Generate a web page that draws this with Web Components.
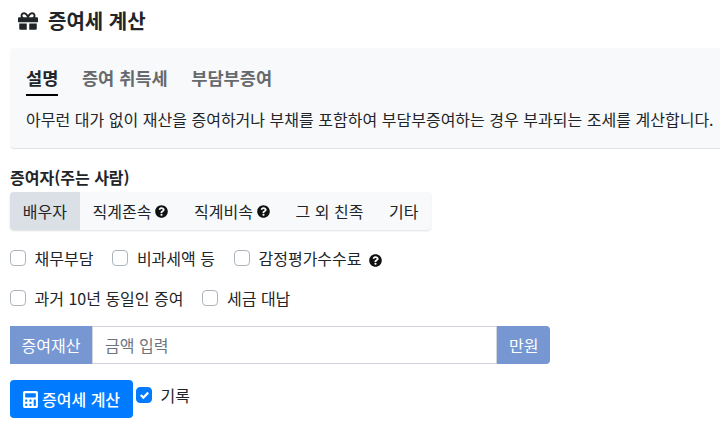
<!DOCTYPE html>
<html lang="ko">
<head>
<meta charset="utf-8">
<title>증여세 계산</title>
<style>
html, body { margin: 0; padding: 0; background: #fff; }
body {
    width: 720px;
    height: 427px;
    overflow: hidden;
    font-family: "Noto Sans CJK KR", "Noto Sans", sans-serif;
    font-size: 16px;
    color: #212529;
}
</style>
</head>
<body>
<gift-calculator></gift-calculator>

<script>
const ICON_HELP = `<svg viewBox="0 0 512 512" width="13" height="13" aria-hidden="true"><path fill="currentColor" d="M504 256c0 137-111 248-248 248S8 393 8 256 119 8 256 8s248 111 248 248zM262.700 90c-54.500 0-89.300 23-116.500 63.800-3.500 5.300-2.400 12.400 2.700 16.300l34.700 26.300c5.200 3.900 12.600 3 16.700-2.100 17.900-22.700 30.100-35.800 57.300-35.800 20.400 0 45.700 13.100 45.700 32.900 0 15-12.400 22.700-32.600 34-23.600 13.200-54.800 29.700-54.800 70.900V300c0 6.600 5.400 12 12 12h56c6.600 0 12-5.400 12-12v-1.300c0-28.600 83.500-29.800 83.500-107.200C379.300 133.300 318.900 90 262.700 90zM256 340c-24.300 0-44 19.700-44 44s19.700 44 44 44 44-19.700 44-44-19.700-44-44-44z"/></svg>`;

class HelpIcon extends HTMLElement {
    constructor() {
        super();
        this.attachShadow({ mode: "open" }).innerHTML = `
        <style>
        :host { display: inline-flex; color: #111; margin: 1px 0 0 4px; }
        :host([wide]) { margin: 4px 0 0 7px; }
        </style>
        ${ICON_HELP}`;
    }
}
customElements.define("help-icon", HelpIcon);

const title_template = document.createElement("template");
title_template.innerHTML = `
<style>
:host { display: flex; align-items: center; gap: 10px; height: 48px; padding: 0 0 6px 18px; box-sizing: border-box; color: #212529; }
h1 { margin: 0; font-size: 20px; font-weight: 700; line-height: 24px; }
svg { display: block; }
</style>
<svg viewBox="0 0 512 512" width="20" height="20" aria-hidden="true"><path fill="#212529" d="M32 448c0 17.700 14.300 32 32 32h160V320H32v128zm256 32h160c17.700 0 32-14.300 32-32V320H288v160zm192-320h-42.100c6.200-12.100 10.100-25.500 10.100-40 0-48.500-39.500-88-88-88-41.600 0-68.500 21.300-103 68.300-34.500-47-61.400-68.300-103-68.300-48.500 0-88 39.500-88 88 0 14.500 3.800 27.900 10.100 40H32c-17.700 0-32 14.300-32 32v80c0 8.800 7.200 16 16 16h480c8.800 0 16-7.200 16-16v-80c0-17.700-14.300-32-32-32zm-326.100 0c-22.100 0-40-17.900-40-40s17.900-40 40-40c19.900 0 34.600 3.300 86.100 80h-86.100zm206.100 0h-86.100c51.400-76.500 65.700-80 86.100-80 22.100 0 40 17.900 40 40s-17.900 40-40 40z"/></svg>
<h1><slot></slot></h1>
`;

class PageTitle extends HTMLElement {
    constructor() {
        super();
        this.attachShadow({ mode: "open" }).appendChild(title_template.content.cloneNode(true));
    }
}
customElements.define("page-title", PageTitle);

const info_template = document.createElement("template");
info_template.innerHTML = `
<style>
:host { display: block; margin-left: 10px; width: 720px; height: 101px; box-sizing: border-box; background: #f8f9fa; border-radius: 4px; border-bottom: 1px solid #e2e3e5; padding: 16px; }
nav { display: flex; gap: 23.500px; height: 32px; }
a { display: block; height: 32px; box-sizing: border-box; font-size: 17.600px; font-weight: 700; line-height: 28px; color: #666a6e; }
a.on { color: #212529; border-bottom: 2px solid #000; }
p { margin: 11px 0 0; font-size: 16px; line-height: 24px; white-space: nowrap; word-spacing: .08px; color: #212529; }
</style>
<nav>
    <a class="on">설명</a>
    <a>증여 취득세</a>
    <a>부담부증여</a>
</nav>
<p><slot></slot></p>
`;

class InfoPanel extends HTMLElement {
    constructor() {
        super();
        this.attachShadow({ mode: "open" }).appendChild(info_template.content.cloneNode(true));
    }
}
customElements.define("info-panel", InfoPanel);

const segment_template = document.createElement("template");
segment_template.innerHTML = `
<style>
:host { display: inline-flex; height: 38px; margin-left: 10px; background: #f8f9fa; border-radius: 4px; box-shadow: 0 1px 2px rgba(0,0,0,.12); overflow: hidden; }
</style>
<slot></slot>
`;

class SegmentGroup extends HTMLElement {
    constructor() {
        super();
        this.attachShadow({ mode: "open" }).appendChild(segment_template.content.cloneNode(true));
    }
}
customElements.define("segment-group", SegmentGroup);

const segment_item_template = document.createElement("template");
segment_item_template.innerHTML = `
<style>
:host { display: inline-flex; align-items: center; padding: 0 12.800px; font-size: 16px; color: #212529; white-space: nowrap; }
:host([active]) { background: #dae0e5; }
</style>
<slot></slot>
`;

class SegmentItem extends HTMLElement {
    constructor() {
        super();
        this.attachShadow({ mode: "open" }).appendChild(segment_item_template.content.cloneNode(true));
    }
}
customElements.define("segment-item", SegmentItem);

const check_template = document.createElement("template");
check_template.innerHTML = `
<style>
:host { display: inline-flex; align-items: center; gap: 8.500px; font-size: 16px; color: #212529; white-space: nowrap; }
i { display: flex; align-items: center; justify-content: center; width: 16px; height: 16px; box-sizing: border-box; border: 1px solid #adb5bd; border-radius: 4px; background: #fff; }
:host([checked]) i { background: #007bff; border-color: #007bff; }
svg { display: none; }
:host([checked]) svg { display: block; }
span { display: inline-flex; align-items: center; }
</style>
<i><svg viewBox="0 0 8 8" width="9" height="9" aria-hidden="true"><path fill="#fff" d="M6.564.750l-3.590 3.612-1.538-1.550L0 4.260l2.974 2.990L8 2.193z"/></svg></i>
<span><slot></slot></span>
`;

class CheckOption extends HTMLElement {
    constructor() {
        super();
        this.attachShadow({ mode: "open" }).appendChild(check_template.content.cloneNode(true));
    }
}
customElements.define("check-option", CheckOption);

const row_template = document.createElement("template");
row_template.innerHTML = `
<style>
:host { display: flex; align-items: center; gap: 19px; padding-left: 10px; height: 24px; }
</style>
<slot></slot>
`;

class CheckRow extends HTMLElement {
    constructor() {
        super();
        this.attachShadow({ mode: "open" }).appendChild(row_template.content.cloneNode(true));
    }
}
customElements.define("check-row", CheckRow);

const input_template = document.createElement("template");
input_template.innerHTML = `
<style>
:host { display: flex; width: 540px; height: 38px; margin-left: 10px; font-size: 16px; }
span { display: flex; align-items: center; padding: 0 11.600px; background: #7797d3; color: #fff; white-space: nowrap; }
span:first-child { border-radius: 4px 0 0 4px; }
span:last-child { border-radius: 0 4px 4px 0; }
input { flex: 1; min-width: 0; border: 1px solid #ced4da; padding: 0 12px; margin: 0; font: inherit; color: #495057; outline: none; }
input::placeholder { color: #6c757d; opacity: 1; }
</style>
<span id="before"></span>
<input type="text" id="field">
<span id="after"></span>
`;

class AmountInput extends HTMLElement {
    constructor() {
        super();
        this.attachShadow({ mode: "open" }).appendChild(input_template.content.cloneNode(true));
    }

    connectedCallback() {
        this.shadowRoot.querySelector("#before").innerText = this.getAttribute("label");
        this.shadowRoot.querySelector("#after").innerText = this.getAttribute("unit");
        this.shadowRoot.querySelector("#field").placeholder = this.getAttribute("placeholder");
    }
}
customElements.define("amount-input", AmountInput);

const button_template = document.createElement("template");
button_template.innerHTML = `
<style>
:host { display: inline-flex; }
button { display: flex; align-items: center; gap: 4px; height: 38px; padding: 0 13px; border: 0; border-radius: 4px; background: #007bff; color: #fff; font: inherit; font-size: 16px; font-weight: 500; }
svg { display: block; }
</style>
<button type="button">
<svg viewBox="0 0 448 512" width="15" height="17" aria-hidden="true"><path fill="#fff" d="M400 0H48C22.400 0 0 22.400 0 48v416c0 25.600 22.400 48 48 48h352c25.600 0 48-22.400 48-48V48c0-25.600-22.400-48-48-48zM128 435.200c0 6.400-6.400 12.800-12.800 12.800H76.800c-6.400 0-12.800-6.400-12.800-12.800v-38.400c0-6.400 6.400-12.800 12.800-12.800h38.400c6.400 0 12.800 6.400 12.800 12.800v38.400zm0-128c0 6.400-6.400 12.800-12.800 12.800H76.800c-6.400 0-12.800-6.400-12.800-12.800v-38.400c0-6.400 6.400-12.800 12.800-12.800h38.400c6.400 0 12.800 6.400 12.800 12.800v38.400zm128 128c0 6.400-6.400 12.800-12.800 12.800h-38.400c-6.400 0-12.800-6.400-12.800-12.800v-38.400c0-6.400 6.400-12.800 12.800-12.800h38.400c6.400 0 12.800 6.400 12.800 12.800v38.400zm0-128c0 6.400-6.400 12.800-12.800 12.800h-38.400c-6.400 0-12.800-6.400-12.800-12.800v-38.400c0-6.400 6.400-12.800 12.800-12.800h38.400c6.400 0 12.800 6.400 12.800 12.800v38.400zm128 128c0 6.400-6.400 12.800-12.800 12.800h-38.400c-6.400 0-12.800-6.400-12.800-12.800V268.800c0-6.400 6.400-12.800 12.800-12.800h38.400c6.400 0 12.800 6.400 12.800 12.800v166.400zm0-256c0 6.400-6.400 12.800-12.800 12.800H76.800c-6.400 0-12.800-6.400-12.800-12.800V76.800C64 70.400 70.400 64 76.800 64h294.400c6.400 0 12.800 6.400 12.800 12.800v102.400z"/></svg>
<slot></slot>
</button>
`;

class CalcButton extends HTMLElement {
    constructor() {
        super();
        this.attachShadow({ mode: "open" }).appendChild(button_template.content.cloneNode(true));
    }
}
customElements.define("calc-button", CalcButton);

const app_template = document.createElement("template");
app_template.innerHTML = `
<style>
:host { display: block; }
h2 { margin: 17px 0 4px 10px; font-size: 16px; font-weight: 700; line-height: 22px; color: #212529; }
.rows { display: flex; flex-direction: column; gap: 16px; margin-top: 16px; }
amount-input { margin-top: 16px; }
.submit { display: flex; align-items: flex-start; gap: 3px; margin: 16px 0 0 10px; }
.submit check-option { margin-top: 3px; }
</style>
<page-title>증여세 계산</page-title>
<info-panel>아무런 대가 없이 재산을 증여하거나 부채를 포함하여 부담부증여하는 경우 부과되는 조세를 계산합니다.</info-panel>
<h2>증여자(주는 사람)</h2>
<segment-group>
    <segment-item active>배우자</segment-item>
    <segment-item>직계존속<help-icon></help-icon></segment-item>
    <segment-item>직계비속<help-icon></help-icon></segment-item>
    <segment-item>그 외 친족</segment-item>
    <segment-item>기타</segment-item>
</segment-group>
<div class="rows">
    <check-row>
        <check-option>채무부담</check-option>
        <check-option>비과세액 등</check-option>
        <check-option>감정평가수수료<help-icon wide></help-icon></check-option>
    </check-row>
    <check-row>
        <check-option>과거 10년 동일인 증여</check-option>
        <check-option>세금 대납</check-option>
    </check-row>
</div>
<amount-input label="증여재산" unit="만원" placeholder="금액 입력"></amount-input>
<div class="submit">
    <calc-button>증여세 계산</calc-button>
    <check-option checked>기록</check-option>
</div>
`;

class GiftCalculator extends HTMLElement {
    constructor() {
        super();
        this.attachShadow({ mode: "open" }).appendChild(app_template.content.cloneNode(true));
    }
}
customElements.define("gift-calculator", GiftCalculator);
</script>
</body>
</html>
